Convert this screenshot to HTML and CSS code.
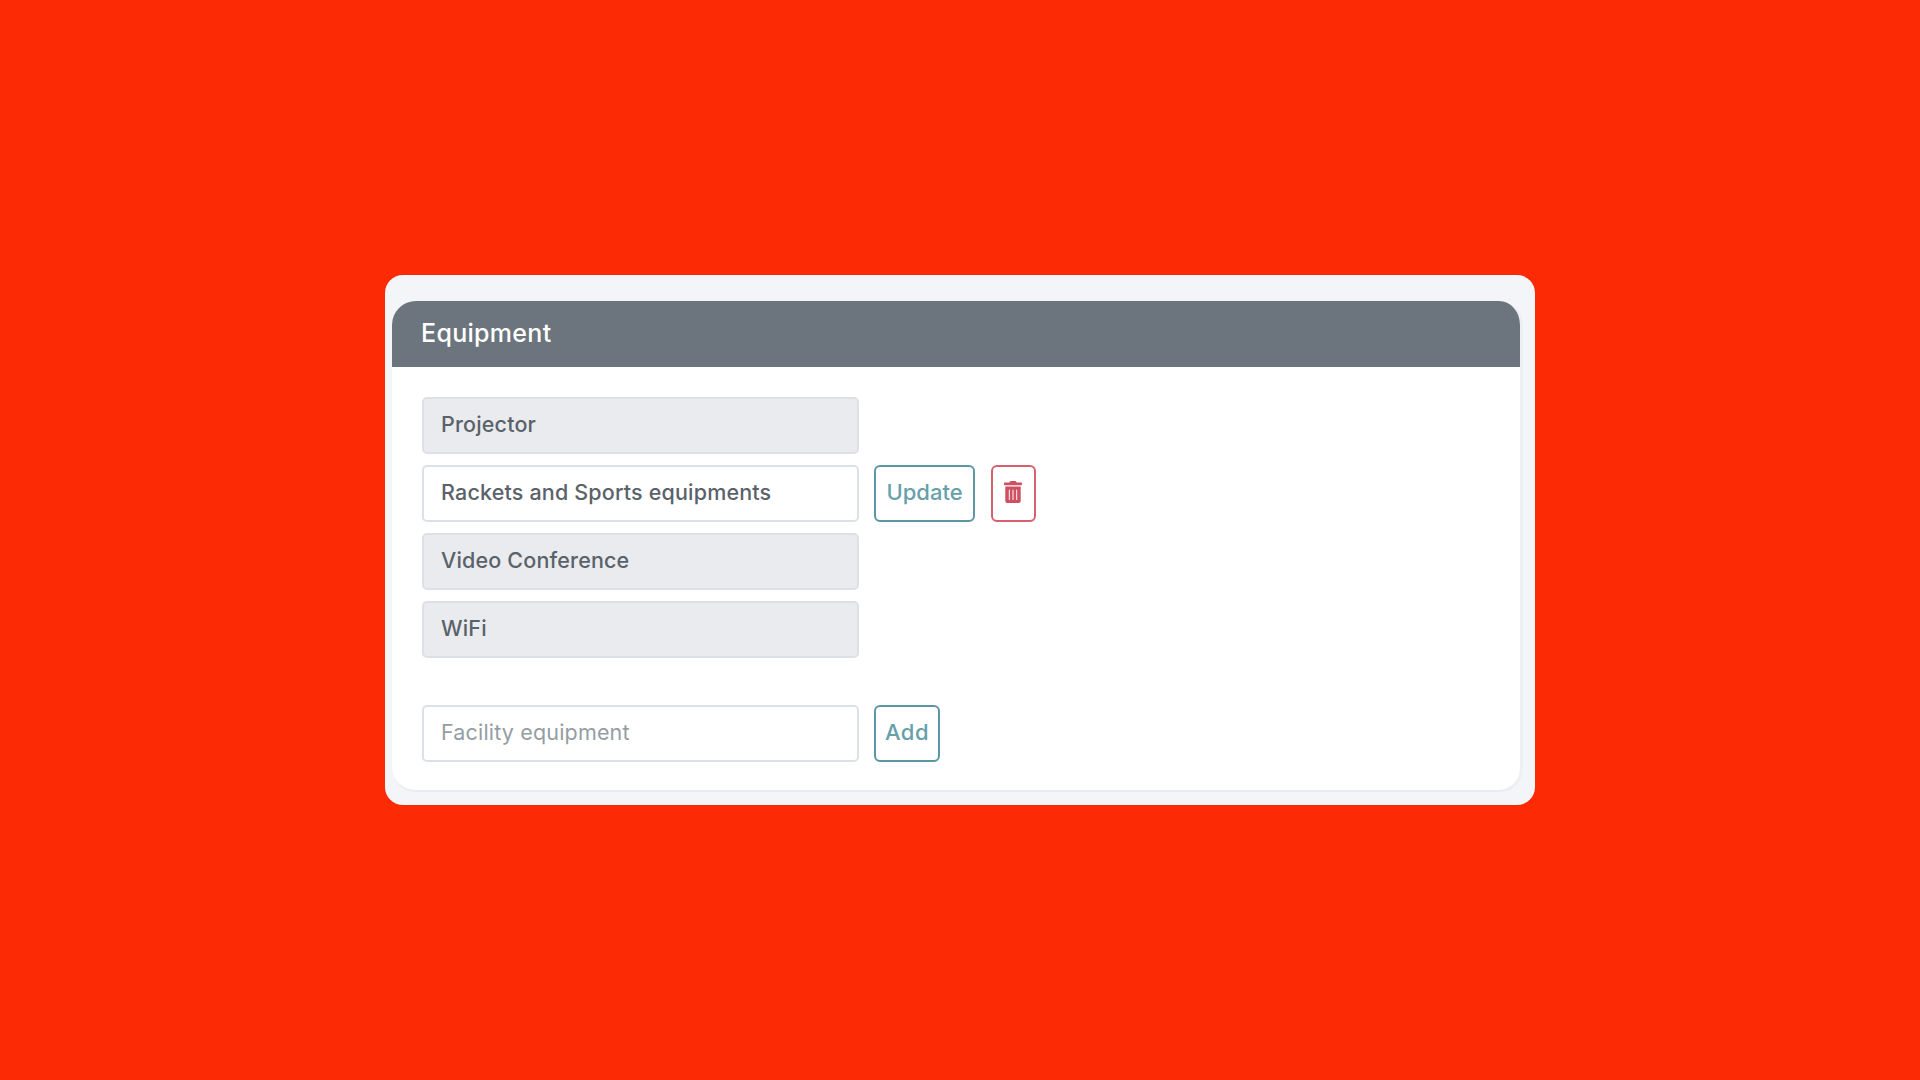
FILE: index.html
```html
<!DOCTYPE html>
<html lang="en">

<head>
  <meta charset="UTF-8" />
  <title>Equipment</title>
  <link rel="stylesheet" href="styles.css">
</head>
<body>
  <div class="panel">
    <div class="card">
      <div class="card-header">Equipment</div>
      <div class="card-body">
        <div class="row">
          <input class="field" type="text" value="Projector" disabled />
        </div>
        <div class="row">
          <input class="field" type="text" value="Rackets and Sports equipments" />
          <button class="btn btn-teal btn-update">Update</button>
          <button class="btn btn-red" aria-label="Delete">
            <svg class="trash" viewBox="0 0 448 512" width="18" height="22" preserveAspectRatio="none">
              <path fill="currentColor" d="M32 464a48 48 0 0 0 48 48h288a48 48 0 0 0 48-48V128H32zm272-256a12 12 0 0 1 24 0v224a12 12 0 0 1-24 0zm-92 0a12 12 0 0 1 24 0v224a12 12 0 0 1-24 0zm-92 0a12 12 0 0 1 24 0v224a12 12 0 0 1-24 0zM432 32H312l-9.4-18.7A24 24 0 0 0 281.1 0H166.8a23.700 23.700 0 0 0-21.400 13.300L136 32H16A16 16 0 0 0 0 48v32a16 16 0 0 0 16 16h416a16 16 0 0 0 16-16V48a16 16 0 0 0-16-16z"/>
            </svg>
          </button>
        </div>
        <div class="row">
          <input class="field" type="text" value="Video Conference" disabled />
        </div>
        <div class="row">
          <input class="field" type="text" value="WiFi" disabled />
        </div>
        <div class="row row-add">
          <input class="field" type="text" placeholder="Facility equipment" />
          <button class="btn btn-teal btn-add">Add</button>
        </div>
      </div>
    </div>
  </div>
</body>
</html>
```

FILE: styles.css
```css
* {
  margin: 0;
  padding: 0;
  box-sizing: border-box;
  font-family: 'Inter', 'Open Sans', sans-serif;
}

body {
  background: #fc2b05;
  min-height: 100vh;
  display: flex;
  justify-content: center;
  align-items: center;
}

.panel {
  width: 1150px;
  height: 530px;
  padding: 26px 12px 13px 7px;
  background: #f3f5f9;
  border-radius: 18px;
}

.card {
  height: 491px;
  background: white;
  border-right: 3px solid #eceff4;
  border-bottom: 2px solid #e9edf2;
  border-radius: 24px;
  overflow: hidden;
}

.card-header {
  height: 66px;
  padding-left: 29px;
  padding-bottom: 2px;
  display: flex;
  align-items: center;
  background: #6c757d;
  color: white;
  font-size: 25px;
  font-weight: 500;
  letter-spacing: 0.3px;
}

.card-body {
  padding: 30px 30px 0;
  display: flex;
  flex-direction: column;
  gap: 11px;
}

.row {
  display: flex;
  align-items: stretch;
  height: 57px;
}

.row-add {
  margin-top: 36px;
}

.field {
  width: 437px;
  padding: 0 17px 4px;
  border: 2px solid #dde0e4;
  border-radius: 5px;
  background: white;
  color: #5a6269;
  font-size: 21.5px;
  font-weight: 500;
  letter-spacing: 0.17px;
  outline: none;
}

.field:disabled {
  background: #e9ebef;
  opacity: 1;
}

.field::placeholder {
  color: #959da4;
  font-weight: 400;
}

.btn {
  border: 2px solid;
  border-radius: 6px;
  background: white;
  font-size: 22px;
  font-weight: 500;
  cursor: pointer;
}

.btn-teal {
  margin-left: 15px;
  padding-bottom: 4px;
  border-color: #5c96a3;
  color: #679fab;
}

.btn-update {
  width: 101px;
}

.btn-add {
  width: 66px;
  letter-spacing: 0.5px;
}

.btn-red {
  width: 45px;
  margin-left: 16px;
  display: flex;
  justify-content: center;
  align-items: center;
  border-color: #d5606e;
  color: #cf5060;
}

.trash {
  margin-right: 1px;
  margin-bottom: 4px;
}
```
